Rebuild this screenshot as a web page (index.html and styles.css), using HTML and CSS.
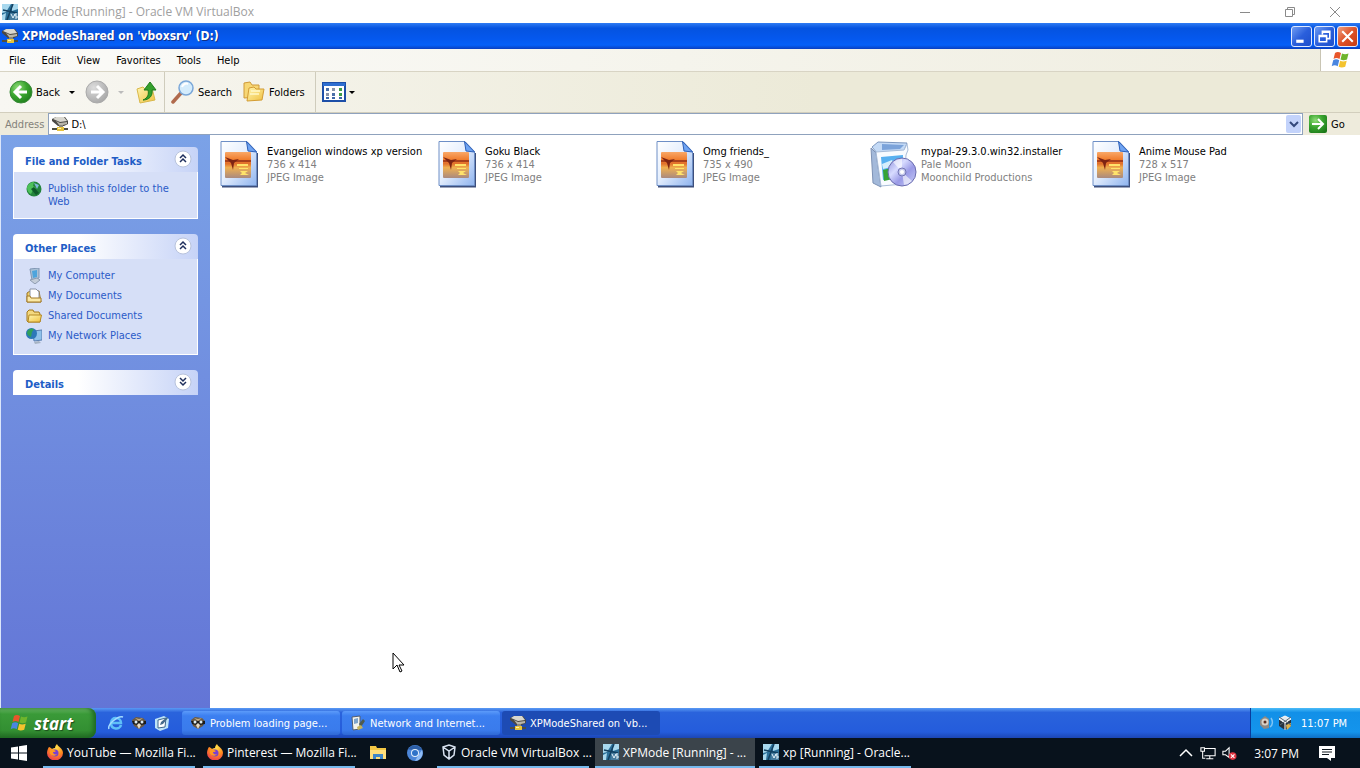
FILE: index.html
```html
<!DOCTYPE html>
<html lang="en">
<head>
    <meta charset="UTF-8">
    <meta name="viewport" content="width=device-width, initial-scale=1.0">
    <title>XPMode [Running] - Oracle VM VirtualBox</title>
    <link rel="stylesheet" href="styles.css">
</head>
<body>
    <!-- Shared icons -->
    <svg class="sprite" aria-hidden="true">
        <defs>
            <linearGradient id="gPage" x1="0" y1="0" x2="1" y2="1">
                <stop offset="0" stop-color="#ffffff"/><stop offset=".45" stop-color="#e6effd"/><stop offset="1" stop-color="#8fb4ef"/>
            </linearGradient>
            <linearGradient id="gSunset" x1="0" y1="0" x2="0" y2="1">
                <stop offset="0" stop-color="#f9a868"/><stop offset=".3" stop-color="#f07c2c"/><stop offset=".45" stop-color="#e0702c"/><stop offset=".6" stop-color="#f0b050"/><stop offset="1" stop-color="#a98a80"/>
            </linearGradient>
            <radialGradient id="gGreen" cx=".35" cy=".3" r=".8">
                <stop offset="0" stop-color="#8fdc78"/><stop offset=".5" stop-color="#3aa52f"/><stop offset="1" stop-color="#1c7a1a"/>
            </radialGradient>
            <radialGradient id="gGray" cx=".35" cy=".3" r=".8">
                <stop offset="0" stop-color="#dcdcdc"/><stop offset="1" stop-color="#a4a4a4"/>
            </radialGradient>
            <linearGradient id="gFolder" x1="0" y1="0" x2="1" y2="1">
                <stop offset="0" stop-color="#fff6b0"/><stop offset="1" stop-color="#f0c040"/>
            </linearGradient>
            <linearGradient id="gDisc" x1="0" y1="0" x2="1" y2="1">
                <stop offset="0" stop-color="#8e90dc"/><stop offset=".35" stop-color="#d8dcff"/><stop offset=".6" stop-color="#9a9ae6"/><stop offset="1" stop-color="#c9d0f8"/>
            </linearGradient>
            <radialGradient id="gFox" cx=".6" cy=".2" r=".9">
                <stop offset="0" stop-color="#ffe14a"/><stop offset=".5" stop-color="#ff8a1e"/><stop offset="1" stop-color="#e82c5a"/>
            </radialGradient>
        </defs>
        <symbol id="jpeg" viewBox="0 0 48 48">
            <path d="M7 46.500h35V13" fill="none" stroke="#3d4f7c" stroke-width="2"/>
            <path d="M6 1.500h26l9.500 10V45.500H6z" fill="url(#gPage)" stroke="#6e8fc6"/>
            <path d="M31.500 1.500 33 11l8.500 1z" fill="#6fa4f2" stroke="#2d5fb8"/>
            <rect x="10" y="12" width="26" height="26" rx="1" fill="url(#gSunset)"/>
            <path d="M10 20h26v2H10z" fill="#a8401c"/>
            <path d="m10 17 8 3 6-1-5 4-1 7-2-7z" fill="#7e2413"/>
            <path d="M22 24h11v2H22zM24 28h9v1h-9zM25 31h8l-3 2 4 2h-9l2-2z" fill="#ffe36b"/>
        </symbol>
        <symbol id="installer" viewBox="0 0 48 48">
            <path d="m2 8 5 5 5 34-8-4z" fill="#a3b9da" stroke="#7d92b5"/>
            <path d="m3 7 6-5 29 1-3 8-27 2z" fill="#c4daf6" stroke="#7c97bf"/>
            <path d="m13 4 22 1-4 4-18 1z" fill="#7ba3da"/>
            <path d="m7 12 28-2 3-6 1 6-2 5-2 29-23 2z" fill="#f8fbff" stroke="#a8bcd8"/>
            <path d="m12 17 22-2-1 22-19 3z" fill="#58b0f0"/>
            <path d="m13 24 10-4 3 6-12 3z" fill="#d6eefc"/>
            <path d="m14 30 8-2 2 11-9 2z" fill="#35a335"/>
            <path d="m21 28 3-2 1 6-3 2z" fill="#e24a2c"/>
            <circle cx="33" cy="32" r="14" fill="url(#gDisc)" stroke="#6a6cae"/>
            <path d="m33 32-9-10a14 14 0 0 1 9-3zM33 32l10 9a14 14 0 0 1-8 4z" fill="#ffffff" opacity=".6"/>
            <circle cx="33" cy="32" r="4" fill="#c6c9ec" stroke="#7275b5"/>
            <circle cx="33" cy="32" r="2" fill="#fff"/>
        </symbol>
        <symbol id="netdrive" viewBox="0 0 16 16">
            <path d="M0 3 4 1h9l3 4v3l-4 2H6L0 5z" fill="#4a4844"/>
            <path d="M1 3 4 1h8l3 4-7 1z" fill="#d9d7cf"/>
            <path d="m4 5 4 2 7-1v2l-4 1H7z" fill="#b9b6ab"/>
            <path d="M7 9h4v3H7z" fill="#8a877c"/>
            <path d="M0 12h16v2H0z" fill="#4f4f42"/>
            <path d="M5 11h7v4H5z" fill="#e8c43c"/>
            <path d="M6 12h3v1H6z" fill="#fff3b0"/>
        </symbol>
        <symbol id="vm" viewBox="0 0 16 16">
            <path d="M0 0h16v16H0z" fill="#2b6f98"/>
            <path d="M0 0h9L4 8 0 9zM10 0h6v5l-6 2zM0 11l4-2-1 7H0z" fill="#a8d8ee"/>
            <path d="m1 6 14 3M11 0 5 16" stroke="#123f5f" stroke-width="1.500"/>
            <path d="M8 9h8v7H8z" fill="#477b9d"/>
            <path d="m9 10 2 4 2-4M13 14h2v-2h-2v-2h2" fill="none" stroke="#e6f5fc"/>
        </symbol>
        <symbol id="folder" viewBox="0 0 16 16">
            <path d="M1 13V4l2-2h4l1 2h5l1 2v8H2z" fill="#f3d880" stroke="#a37618"/>
            <path d="M3 7h12.500L14 14H2z" fill="url(#gFolder)" stroke="#b58a25"/>
        </symbol>
        <symbol id="flag" viewBox="0 0 20 18">
            <path d="M4 2c2-1.500 4-1.200 6 0L8.500 8c-2-1.200-4-1.300-6 0z" fill="#e8562b"/>
            <path d="M11 2.500c2 1 4 1 6.500 0L16 8.500c-2.500 1-4.500 1-6.500 0z" fill="#6fb52c"/>
            <path d="M2.200 9.200c2-1.300 4-1.200 6 0l-1.500 6c-2-1.200-4-1.200-6 0z" fill="#4a86e0"/>
            <path d="M9.200 9.700c2 1 4 1 6.500 0l-1.500 6c-2.500 1-4.500 1-6.500 0z" fill="#f4c32e"/>
        </symbol>
        <symbol id="mypal" viewBox="0 0 16 16">
            <path d="M1 5 5 2l7 1 3 3-2 5-5 3-5-3z" fill="#6b5a45"/>
            <path d="M1 6h14v3l-5 1-2-1-2 1-4-1z" fill="#1c1b1a"/>
            <circle cx="5" cy="7" r="1.500" fill="#dcebf2"/><circle cx="11" cy="7" r="1.500" fill="#dcebf2"/>
            <path d="m6 10 2-2 2 2-2 4z" fill="#e7dcc6"/>
            <path d="m4 3 4 1 4-1-4 3z" fill="#c2ae85"/>
        </symbol>
        <symbol id="firefox" viewBox="0 0 16 16">
            <path d="M2 3c1 0 2 1 3 2 1-1 2-1 3-1 0-2 1-3 2-4 1 3 6 4 6 9a8 7.500 0 0 1-16 0c0-2 1-5 2-6z" fill="url(#gFox)"/>
            <circle cx="8" cy="9" r="3.500" fill="#7a3fd0"/>
            <path d="M3 6c2-1 4 0 6 1-1 1-2 1-3 1 0 2 2 3 4 2-2 3-6 2-7-1z" fill="#ff9a1f"/>
        </symbol>
        <symbol id="up2" viewBox="0 0 18 18">
            <circle cx="9" cy="9" r="8" fill="#fff" stroke="#b8c3dc"/>
            <path d="m6 8 3-3 3 3M6 12l3-3 3 3" fill="none" stroke="#1f2f5c" stroke-width="1.500"/>
        </symbol>
        <symbol id="down2" viewBox="0 0 18 18">
            <circle cx="9" cy="9" r="8" fill="#fff" stroke="#b8c3dc"/>
            <path d="m6 5 3 3 3-3M6 9l3 3 3-3" fill="none" stroke="#1f2f5c" stroke-width="1.500"/>
        </symbol>
    </svg>

    <!-- VirtualBox window -->
    <header class="vm-title">
        <svg class="i16"><use href="#vm"/></svg>
        <span>XPMode [Running] - Oracle VM VirtualBox</span>
        <div class="vm-controls">
            <button aria-label="Minimize"><svg viewBox="0 0 12 12"><path d="M1 6.500h10"/></svg></button>
            <button aria-label="Restore"><svg viewBox="0 0 12 12"><path d="M1.500 3.500h7v7h-7zM3.500 3V1.500h7v7H9"/></svg></button>
            <button aria-label="Close"><svg viewBox="0 0 12 12"><path d="m1 1 10 10M11 1 1 11"/></svg></button>
        </div>
    </header>

    <!-- Explorer window -->
    <div class="xp-title">
        <svg class="i16"><use href="#netdrive"/></svg>
        <h1>XPModeShared on 'vboxsrv' (D:)</h1>
        <div class="xp-controls">
            <button aria-label="Minimize window"><svg viewBox="0 0 18 18"><path d="M4 12h7v3H4z" fill="#fff"/></svg></button>
            <button aria-label="Restore window"><svg viewBox="0 0 18 18"><path d="M4 8h7v6H4zM7 7V4h7v7h-3M4 9h7M7 5h7" fill="none" stroke="#fff" stroke-width="1.500"/></svg></button>
            <button class="close" aria-label="Close window"><svg viewBox="0 0 18 18"><path d="m4 4 10 10M14 4 4 14" stroke="#fff" stroke-width="2"/></svg></button>
        </div>
    </div>

    <nav class="menu">
        <button>File</button>
        <button>Edit</button>
        <button>View</button>
        <button>Favorites</button>
        <button>Tools</button>
        <button>Help</button>
        <div class="brand"><svg viewBox="0 0 20 18"><use href="#flag"/></svg></div>
    </nav>

    <div class="toolbar">
        <div class="tools nav-tools">
            <button>
                <svg class="i24" viewBox="0 0 24 24"><circle cx="12" cy="12" r="11" fill="url(#gGreen)" stroke="#3a8a38"/><path d="M18 12H7m5-6-6 6 6 6" fill="none" stroke="#fff" stroke-width="3"/></svg>
                Back
                <i class="caret"></i>
            </button>
            <button disabled aria-label="Forward">
                <svg class="i24" viewBox="0 0 24 24"><circle cx="12" cy="12" r="11" fill="url(#gGray)" stroke="#aaa"/><path d="M6 12h11m-5-6 6 6-6 6" fill="none" stroke="#fff" stroke-width="3"/></svg>
                <i class="caret"></i>
            </button>
            <button aria-label="Up">
                <svg class="i24" viewBox="0 0 24 24"><path d="m3 9 6-2 2 2 7-1 3 12-15 3z" fill="url(#gFolder)" stroke="#d9b84a"/><path d="M9 20c5-2 6-6 5-10h-4l6-8 6 8h-4c1 6-3 10-9 10z" fill="#35a02c" stroke="#1f7d1c"/></svg>
            </button>
        </div>
        <div class="tools">
            <button>
                <svg class="i24" viewBox="0 0 24 24"><path d="m2 22 8-9" stroke="#b06a4c" stroke-width="3.500" stroke-linecap="round"/><circle cx="15" cy="8" r="7" fill="#d4ecfc" stroke="#7aa7d8" stroke-width="1.500"/><path d="M11 7c1-3 4-4 6-3" fill="none" stroke="#fff" stroke-width="2"/></svg>
                Search
            </button>
            <button class="folders">
                <svg class="i24" viewBox="0 0 24 24"><path d="M2 18V3l6-1 2 3h7v12z" fill="#f7d774" stroke="#cf9a38"/><path d="m5 21 2-13 5-1 2 2h8l-2 11z" fill="url(#gFolder)" stroke="#d39c34"/><path d="M9 11h9M8 14h9" stroke="#fff7c8" stroke-width="1.500"/></svg>
                Folders
            </button>
        </div>
        <div class="tools">
            <button class="views" aria-label="Views">
                <svg viewBox="0 0 24 20"><path d="M1 1h22v18H1z" fill="#fff" stroke="#1d4fa8" stroke-width="2"/><path d="M1 1h22v3H1z" fill="#2f6fd0"/><path d="M4 6h3v3H4zM10 11h3v3h-3z" fill="#4a6ea8"/><path d="M10 6h3v3h-3zM4 11h3v3H4z" fill="#8a94a8"/><path d="M17 6h3v3h-3zM17 11h3v3h-3z" fill="#3d9c46"/><path d="M4 15h3v2H4zM10 15h3v2h-3zM17 15h3v2h-3z" fill="#3d67a8"/></svg>
                <i class="caret"></i>
            </button>
        </div>
    </div>

    <form class="address">
        <label for="path">Address</label>
        <div class="combo">
            <svg class="i16"><use href="#netdrive"/></svg>
            <input id="path" type="text" value="D:\">
            <button type="button" class="drop" aria-label="Show addresses"><svg viewBox="0 0 10 10"><path d="m1 3 4 4 4-4" fill="none" stroke="#33487c" stroke-width="2"/></svg></button>
        </div>
        <button type="button" class="go">
            <svg viewBox="0 0 18 18"><rect width="18" height="18" rx="2" fill="url(#gGreen)"/><path d="M3 9h10M9 4l5 5-5 5" fill="none" stroke="#fff" stroke-width="2"/></svg>
            Go
        </button>
    </form>

    <div class="explorer">
        <aside class="sidebar">
            <section class="panel">
                <h2>File and Folder Tasks <button aria-label="Collapse"><svg><use href="#up2"/></svg></button></h2>
                <ul>
                    <li><a href="#"><svg class="i16" viewBox="0 0 16 16"><circle cx="8" cy="8" r="7.500" fill="#23843c"/><path d="M1 6c2-4 5-5 7-5l-1 4 3 2-3 2-2 4C2 12 1 9 1 6z" fill="#4cc05a"/><path d="m8 2 5 2-2 4z" fill="#7fb8d8"/><path d="m5 8 3-2 5 6-3 2z" fill="#0e5a2a"/></svg><span>Publish this folder to the Web</span></a></li>
                </ul>
            </section>
            <section class="panel">
                <h2>Other Places <button aria-label="Collapse"><svg><use href="#up2"/></svg></button></h2>
                <ul>
                    <li><a href="#"><svg class="i16" viewBox="0 0 16 16"><path d="m4 1 9-1v10l-7 2z" fill="#a9c0d6" stroke="#8097b4"/><path d="m6 3 5-1v7l-4 1z" fill="#4ea4dc"/><path d="m4 12 7-2 3 2-5 4z" fill="#c3ccd8" stroke="#8d9bb0"/></svg><span>My Computer</span></a></li>
                    <li><a href="#"><svg class="i16" viewBox="0 0 16 16"><path d="M1 14V5l3-2h9l2 11z" fill="#f2cf62" stroke="#98742a"/><path d="M4 1h6l3 3v7H4z" fill="#fff" stroke="#8a93a8"/><path d="M1 8h3l1 2h10v4H1z" fill="#fbe9a6" stroke="#a37b27"/></svg><span>My Documents</span></a></li>
                    <li><a href="#"><svg class="i16"><use href="#folder"/></svg><span>Shared Documents</span></a></li>
                    <li><a href="#"><svg class="i16" viewBox="0 0 16 16"><path d="m7 3 9-1v10l-8 1z" fill="#8fc1ea" stroke="#5b7fb0"/><path d="m8 14 5-1 2 2-6 1z" fill="#a6b3c4"/><circle cx="5.500" cy="5.500" r="5.500" fill="#2c78b8"/><path d="M1 4c2-4 5-4 7-3L6 4 5 9C2 8 1 6 1 4z" fill="#2fa05a"/></svg><span>My Network Places</span></a></li>
                </ul>
            </section>
            <section class="panel">
                <h2>Details <button aria-label="Expand"><svg><use href="#down2"/></svg></button></h2>
            </section>
        </aside>

        <main class="files">
            <a href="#" class="file"><svg><use href="#jpeg"/></svg><span><b>Evangelion windows xp version</b>736 x 414<br>JPEG Image</span></a>
            <a href="#" class="file"><svg><use href="#jpeg"/></svg><span><b>Goku Black</b>736 x 414<br>JPEG Image</span></a>
            <a href="#" class="file"><svg><use href="#jpeg"/></svg><span><b>Omg friends_</b>735 x 490<br>JPEG Image</span></a>
            <a href="#" class="file"><svg><use href="#installer"/></svg><span><b>mypal-29.3.0.win32.installer</b>Pale Moon<br>Moonchild Productions</span></a>
            <a href="#" class="file"><svg><use href="#jpeg"/></svg><span><b>Anime Mouse Pad</b>728 x 517<br>JPEG Image</span></a>
        </main>
        <svg class="cursor" viewBox="0 0 13 21"><path d="M1 1v16l4-4 3 7 2-1-3-6h5z" fill="#fff" stroke="#000"/></svg>
    </div>

    <!-- Guest taskbar -->
    <div class="xp-bar">
        <button class="start"><svg viewBox="0 0 20 18"><use href="#flag"/></svg>start</button>
        <div class="quick">
            <button aria-label="Internet Explorer"><svg class="i16" viewBox="0 0 16 16"><path d="M13 10c-1 5-10 5-10-2s10-6 10 0H4" fill="none" stroke="#5fc0f8" stroke-width="2.500"/><path d="M1 14C-1 10 10 0 15 2" fill="none" stroke="#a4dcff" stroke-width="1.500"/></svg></button>
            <button aria-label="Mypal"><svg class="i16"><use href="#mypal"/></svg></button>
            <button aria-label="Show Desktop"><svg class="i16" viewBox="0 0 16 16"><path d="m1 4 9-3 5 3-1 9-8 3-5-3z" fill="#bfe4f8"/><path d="m4 5 8-2-1 9-7 1z" fill="#fff" stroke="#40698d"/><path d="m6 10 1-3 6-5 1 1-5 6z" fill="#456b8c"/></svg></button>
        </div>
        <button class="xp-task"><svg class="i16"><use href="#mypal"/></svg><span>Problem loading page...</span></button>
        <button class="xp-task"><svg class="i16" viewBox="0 0 16 16"><path d="m2 2 8-1v13l-7 1z" fill="#f4f4ee" stroke="#555e6c"/><path d="m4 4 4-1v5l-4 1z" fill="#7ea4cc"/><path d="m9 9 4-5 2 2-4 6z" fill="#4f5c50"/><path d="m7 12 4-2 2 3-5 2z" fill="#c7b35a"/></svg><span>Network and Internet...</span></button>
        <button class="xp-task active"><svg class="i16"><use href="#netdrive"/></svg><span>XPModeShared on 'vb...</span></button>
        <div class="xp-tray">
            <svg class="i16" viewBox="0 0 16 16"><path d="M1 5 6 1l4 3v9l-5 1-4-4z" fill="#8d8a84"/><circle cx="6" cy="7" r="3.500" fill="#d9d1c6"/><circle cx="6" cy="7" r="1.500" fill="#5a3020"/><path d="M11 12c3-2 3-6 1-9" fill="none" stroke="#7fc4f4" stroke-width="1.500"/></svg>
            <svg class="i16" viewBox="0 0 16 16"><path d="m2 4 6-3 6 3v7l-6 4-6-4z" fill="#27323f"/><path d="m2 4 6 4 6-4-6-3zM8 8v7" fill="#dfe9f0" stroke="#fff"/><path d="m9 10 5-2v3l-4 4z" fill="#e2b24a"/><path d="m2 2 12 8M14 2 3 10" stroke="#5b6874" stroke-width="1"/></svg>
            <time>11:07 PM</time>
        </div>
    </div>

    <!-- Host taskbar -->
    <footer class="host-bar">
        <button class="pin win" aria-label="Start"><svg class="i16" viewBox="0 0 16 16"><path d="M0 2.500 7 1.500v6H0zM8 1.300 16 0v7.500H8zM0 8.500h7v6l-7-1zM8 8.500h8V16l-8-1.300z" fill="#fff"/></svg></button>
        <button class="task"><svg class="i16"><use href="#firefox"/></svg><span>YouTube — Mozilla Fi...</span></button>
        <button class="task"><svg class="i16"><use href="#firefox"/></svg><span>Pinterest — Mozilla Fi...</span></button>
        <div class="pins">
            <button class="pin" aria-label="File Explorer"><svg class="i16" viewBox="0 0 16 16"><path d="M0 1h6l1 2h9v11H0z" fill="#f3c745"/><path d="M0 5h16v9H0z" fill="#ffdf7c"/><path d="M3 14V9h10v5h-3v-2H6v2z" fill="#3f86c8"/></svg></button>
            <button class="pin" aria-label="Chromium"><svg class="i16" viewBox="0 0 16 16"><circle cx="8" cy="8" r="8" fill="#4c86d8"/><path d="M1 4.500A8 8 0 0 1 15 5H8z" fill="#2d5fa8"/><path d="M15 5a8 8 0 0 1-7 11l4-7z" fill="#8fbcf6"/><circle cx="8" cy="8" r="4" fill="#e6f0fc"/><circle cx="8" cy="8" r="3" fill="#2f72c8"/></svg></button>
        </div>
        <button class="task"><svg class="i16" viewBox="0 0 16 16"><path d="m2 3 6-2 6 2-1 8-5 4-5-4zM2 3l6 4 6-4M8 7v8" fill="none" stroke="#d8e2f0" stroke-width="1.500"/></svg><span>Oracle VM VirtualBox ...</span></button>
        <button class="task active"><svg class="i16"><use href="#vm"/></svg><span>XPMode [Running] - ...</span></button>
        <button class="task"><svg class="i16"><use href="#vm"/></svg><span>xp [Running] - Oracle...</span></button>
        <div class="tray">
            <button aria-label="Show hidden icons"><svg viewBox="0 0 16 16"><path d="m2 11 6-6 6 6" fill="none" stroke="#fff" stroke-width="1.500"/></svg></button>
            <button aria-label="Network"><svg viewBox="0 0 18 16"><path d="M5 3h12v8H5M11 11v3M7 14.500h8M1 2h4v4H1zM3 6v8h3" fill="none" stroke="#fff" stroke-width="1.200"/></svg></button>
            <button aria-label="Volume"><svg viewBox="0 0 18 16"><path d="M1 6h3l4-4v11L4 10H1z" fill="none" stroke="#fff" stroke-width="1.200"/><circle cx="12" cy="11.500" r="4.300" fill="#e03440"/><path d="m10 9.500 4 4m0-4-4 4" stroke="#fff" stroke-width="1.200"/></svg></button>
            <time>3:07 PM</time>
            <button aria-label="Notifications"><svg viewBox="0 0 16 16"><path d="M0 1h16v12h-4v3l-4-3H0z" fill="#fff"/><path d="M3 4.500h10M3 7h10M3 9.500h7" stroke="#10181f"/></svg></button>
        </div>
    </footer>
</body>
</html>
```
FILE: styles.css
```css
:root {
    --xp-font: "DejaVu Sans Condensed", "Noto Sans", sans-serif;
    --host-font: "Open Sans", "Noto Sans", sans-serif;
    --face: #eeebdc;
    --link: #2b5bc8;
}

* {
    box-sizing: border-box;
}

body {
    margin: 0;
    min-height: 100vh;
    display: flex;
    flex-direction: column;
    font-family: var(--xp-font);
    font-size: 11px;
    color: #000;
    background-color: #fff;
    overflow: hidden;
}

button {
    display: flex;
    align-items: center;
    padding: 0;
    border: none;
    background: none;
    font: inherit;
    color: inherit;
    white-space: nowrap;
}

svg {
    display: block;
    flex: none;
}

.sprite {
    position: absolute;
    width: 0;
    height: 0;
}

.i16 {
    width: 16px;
    height: 16px;
}

.i24 {
    width: 24px;
    height: 24px;
}

/* VirtualBox window title */
.vm-title {
    display: flex;
    align-items: center;
    gap: 4px;
    height: 23px;
    padding: 0 3px 0 2px;
    font-family: var(--host-font);
    font-size: 12px;
    color: #a0a0a0;
}

.vm-controls {
    display: flex;
    margin-left: auto;
}

.vm-controls button {
    width: 45px;
    height: 20px;
    justify-content: center;
}

.vm-controls svg {
    width: 12px;
    height: 12px;
    fill: none;
    stroke: #8a8a8a;
}

/* Explorer title bar */
.xp-title {
    display: flex;
    align-items: center;
    gap: 4px;
    height: 26px;
    padding: 0 2px;
    background: linear-gradient(#2f7cf4, #0553e0 20%, #0558ee 60%, #0560f8 85%, #0a3fc0);
    color: #fff;
}

.xp-title h1 {
    margin: 0;
    font-size: 12px;
    text-shadow: 1px 1px #0f2f86;
}

.xp-controls {
    display: flex;
    gap: 2px;
    margin-left: auto;
}

.xp-controls button {
    width: 21px;
    height: 21px;
    border: 1px solid #dfe9ff;
    border-radius: 3px;
    background: linear-gradient(135deg, #6f9cf2, #2a5fdc 50%, #1e4fcb);
}

.xp-controls .close {
    background: linear-gradient(135deg, #f0a080, #dd5128 50%, #c83c14);
}

/* Menu and toolbars */
.menu {
    display: flex;
    align-items: stretch;
    gap: 16px;
    height: 23px;
    padding-left: 9px;
    background: linear-gradient(90deg, #fbfbf9, #efeddf);
    border-bottom: 1px solid #d8d4c4;
}

.brand {
    display: flex;
    align-items: center;
    justify-content: center;
    width: 40px;
    margin-left: auto;
    background-color: #fff;
    border-left: 1px solid #c9c5b4;
}

.brand svg {
    width: 20px;
    height: 18px;
}

.toolbar {
    display: flex;
    align-items: center;
    height: 41px;
    padding-left: 9px;
    background: linear-gradient(90deg, #f8f7f2, #ecead8 60%);
    border-bottom: 1px solid #d2cebd;
}

.tools {
    display: flex;
    align-items: center;
    height: 100%;
    padding: 0 10px 0 6px;
    border-left: 1px solid #cfccbc;
}

.tools button {
    gap: 3px;
}

.nav-tools {
    gap: 10px;
    padding: 0 6px 0 0;
    border-left: none;
}

.folders {
    margin-left: 10px;
}

.caret {
    margin-left: 6px;
    border: 3px solid transparent;
    border-top-color: #000;
    border-bottom: none;
}

.views .caret {
    margin-left: 0;
}

button:disabled .caret {
    border-top-color: #bbb;
}

.views svg {
    width: 24px;
    height: 20px;
}

.address {
    display: flex;
    align-items: center;
    gap: 4px;
    height: 22px;
    margin: 0;
    padding-left: 5px;
    background-color: var(--face);
}

.address label {
    color: #84827a;
}

.combo {
    display: flex;
    flex: 1;
    align-items: center;
    gap: 3px;
    height: 22px;
    padding: 0 1px 0 3px;
    background-color: #fff;
    border: 1px solid #8fa2bd;
}

.combo input {
    flex: 1;
    min-width: 0;
    padding: 0;
    border: none;
    outline: none;
    font: inherit;
}

.drop {
    width: 15px;
    height: 18px;
    justify-content: center;
    background-color: #c3d3fb;
    border-radius: 2px;
}

.drop svg {
    width: 10px;
    height: 10px;
}

.go {
    width: 53px;
    gap: 4px;
    padding-left: 2px;
}

.go svg {
    width: 18px;
    height: 18px;
}

/* Explorer body */
.explorer {
    position: relative;
    display: flex;
    flex: 1;
}

.sidebar {
    display: flex;
    flex-direction: column;
    gap: 15px;
    width: 210px;
    padding: 12px;
    border-left: 1px solid #dbe6fa;
    background: linear-gradient(#7ba2e7, #6375d6);
}

.panel h2 {
    display: flex;
    align-items: center;
    justify-content: space-between;
    height: 25px;
    margin: 0;
    padding: 3px 6px 0 12px;
    border-radius: 4px 4px 0 0;
    background: linear-gradient(90deg, #fff 35%, #c6d3f7);
    font-size: 11px;
    color: #215dc6;
}

.panel h2 svg {
    width: 18px;
    height: 18px;
    margin-bottom: 4px;
}

.panel ul {
    display: flex;
    flex-direction: column;
    gap: 4px;
    margin: 0;
    padding: 9px 12px 10px;
    list-style: none;
    background-color: #d6dff7;
    border: 1px solid #fff;
    border-top: none;
}

.panel a {
    display: flex;
    gap: 6px;
    line-height: 13px;
    color: var(--link);
    text-decoration: none;
}

.panel a span {
    padding-top: 1px;
}

.files {
    flex: 1;
    display: grid;
    grid-template-columns: repeat(auto-fill, 218px);
    align-content: start;
    padding: 5px;
    background-color: #fff;
}

.file {
    display: flex;
    gap: 4px;
    line-height: 13px;
    color: #808080;
    text-decoration: none;
    white-space: nowrap;
}

.file svg {
    width: 48px;
    height: 48px;
}

.file span {
    padding-top: 5px;
}

.file b {
    display: block;
    font-weight: normal;
    color: #000;
}

.cursor {
    position: absolute;
    left: 392px;
    top: 517px;
    width: 13px;
    height: 21px;
}

/* Guest taskbar */
.xp-bar {
    display: flex;
    align-items: stretch;
    height: 30px;
    background: linear-gradient(#5a9af4, #2a63dc 15%, #245cdc 80%, #1c46b4);
    color: #fff;
}

.start {
    gap: 4px;
    width: 96px;
    padding-left: 10px;
    border-radius: 0 8px 8px 0;
    background: linear-gradient(#6cb868, #3a9a38 20%, #338f32 75%, #226c24);
    box-shadow: inset -3px 0 4px #1f6a22;
    font-family: "Open Sans", sans-serif;
    font-size: 17px;
    font-weight: bold;
    font-style: italic;
    text-shadow: 1px 1px 1px #1c4c1c;
}

.start svg {
    width: 20px;
    height: 18px;
}

.quick {
    display: flex;
    gap: 7px;
    width: 85px;
    padding-left: 12px;
}

.xp-task {
    width: 158px;
    margin: 3px 1px;
    gap: 4px;
    padding: 0 8px;
    border-radius: 3px;
    background: linear-gradient(#5c9bfa, #3c7ff0 20%, #3a7bec 80%, #2f68d4);
}

.xp-task.active {
    background: #1d4bb4;
}

.xp-tray {
    display: flex;
    align-items: center;
    gap: 2px;
    width: 110px;
    margin-left: auto;
    padding-left: 8px;
    border-left: 1px solid #0a3c9c;
    background: linear-gradient(#4cbcf8, #1290e8 15%, #1494ec 80%, #0f6fc4);
}

.xp-tray time {
    margin-left: 6px;
}

/* Host taskbar */
.host-bar {
    display: flex;
    align-items: stretch;
    height: 30px;
    background-color: #08121c;
    font-family: var(--host-font);
    font-size: 12px;
    color: #fff;
}

.pin {
    width: 37px;
    justify-content: center;
}

.pins {
    display: flex;
    margin: 0 4px 0 -4px;
}

.win {
    margin-right: 6px;
}

.task {
    width: 152px;
    margin-right: 8px;
    gap: 4px;
    padding: 0 4px;
    border-bottom: 2px solid #76b9ed;
}

.task.active {
    width: 160px;
    margin-right: 4px;
    margin-left: -2px;
    padding-left: 8px;
    background-color: #3b444b;
}

.tray {
    display: flex;
    align-items: center;
    gap: 6px;
    margin-left: auto;
    padding-right: 25px;
}

.tray svg {
    width: 16px;
    height: 16px;
}

.tray time {
    margin: 0 14px 0 10px;
}
```
